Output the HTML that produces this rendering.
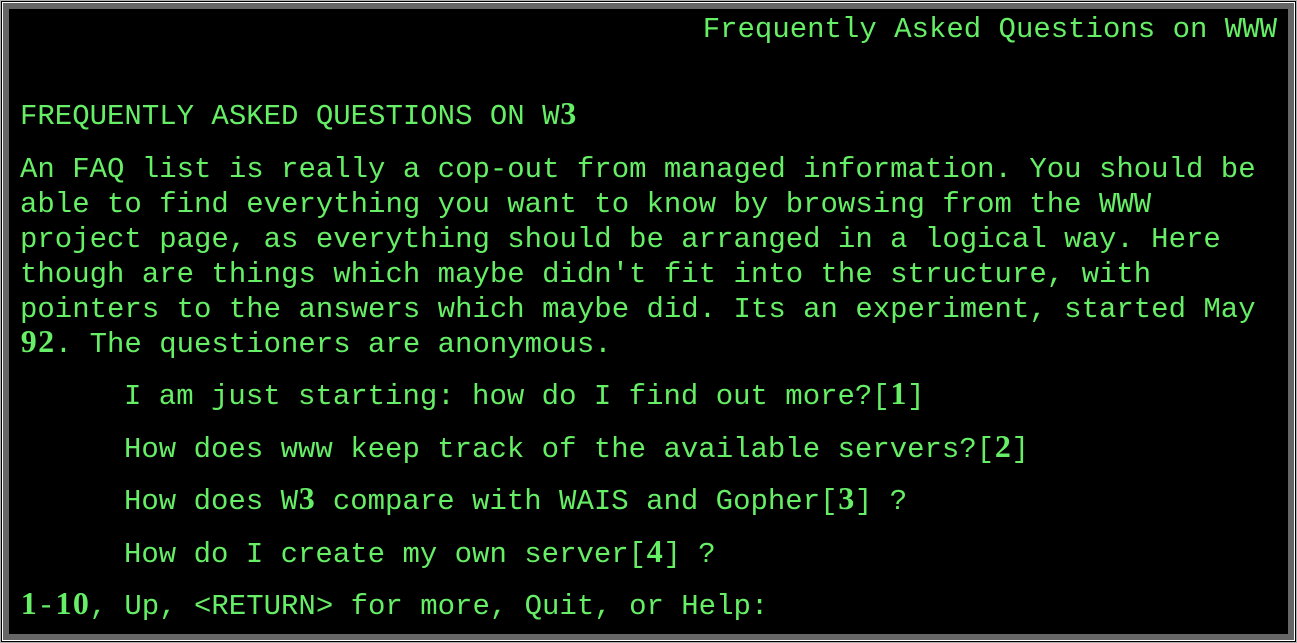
<!DOCTYPE html>
<html><head><meta charset="utf-8"><style>
html,body{margin:0;padding:0;background:#000;}
body{width:1297px;height:643px;position:relative;overflow:hidden;}
.frame{position:absolute;left:0;top:0;width:1297px;height:643px;box-sizing:border-box;border:1px solid #b0b0b0;}
.f2{position:absolute;left:1px;top:1px;right:1px;bottom:1px;border:1px solid #fff;}
.f3{position:absolute;left:2px;top:2px;right:2px;bottom:2px;border:6px solid #666;background:#000;}
.t{position:absolute;font-family:"Liberation Mono",monospace;font-size:29px;line-height:35px;color:#66ee66;white-space:pre;}
.d{font-family:"Liberation Serif",serif;font-weight:bold;font-size:32px;line-height:29px;display:inline-block;width:17.4px;text-align:center;}
</style></head><body>
<div class="frame"><div class="f2"></div><div class="f3"></div></div>
<div class="t" style="right:20px;top:12px">Frequently Asked Questions on WWW</div>
<div class="t" style="left:20px;top:99px">FREQUENTLY ASKED QUESTIONS ON W<span class="d">3</span></div>
<div class="t" style="left:20px;top:152px">An FAQ list is really a cop-out from managed information. You should be
able to find everything you want to know by browsing from the WWW
project page, as everything should be arranged in a logical way. Here
though are things which maybe didn't fit into the structure, with
pointers to the answers which maybe did. Its an experiment, started May
<span class="d">9</span><span class="d">2</span>. The questioners are anonymous.</div>
<div class="t" style="left:124px;top:379px">I am just starting: how do I find out more?[<span class="d">1</span>]</div>
<div class="t" style="left:124px;top:432px">How does www keep track of the available servers?[<span class="d">2</span>]</div>
<div class="t" style="left:124px;top:484px">How does W<span class="d">3</span> compare with WAIS and Gopher[<span class="d">3</span>] ?</div>
<div class="t" style="left:124px;top:537px">How do I create my own server[<span class="d">4</span>] ?</div>
<div class="t" style="left:20px;top:589px"><span class="d">1</span>-<span class="d">1</span><span class="d">0</span>, Up, &lt;RETURN&gt; for more, Quit, or Help:</div>
</body></html>
